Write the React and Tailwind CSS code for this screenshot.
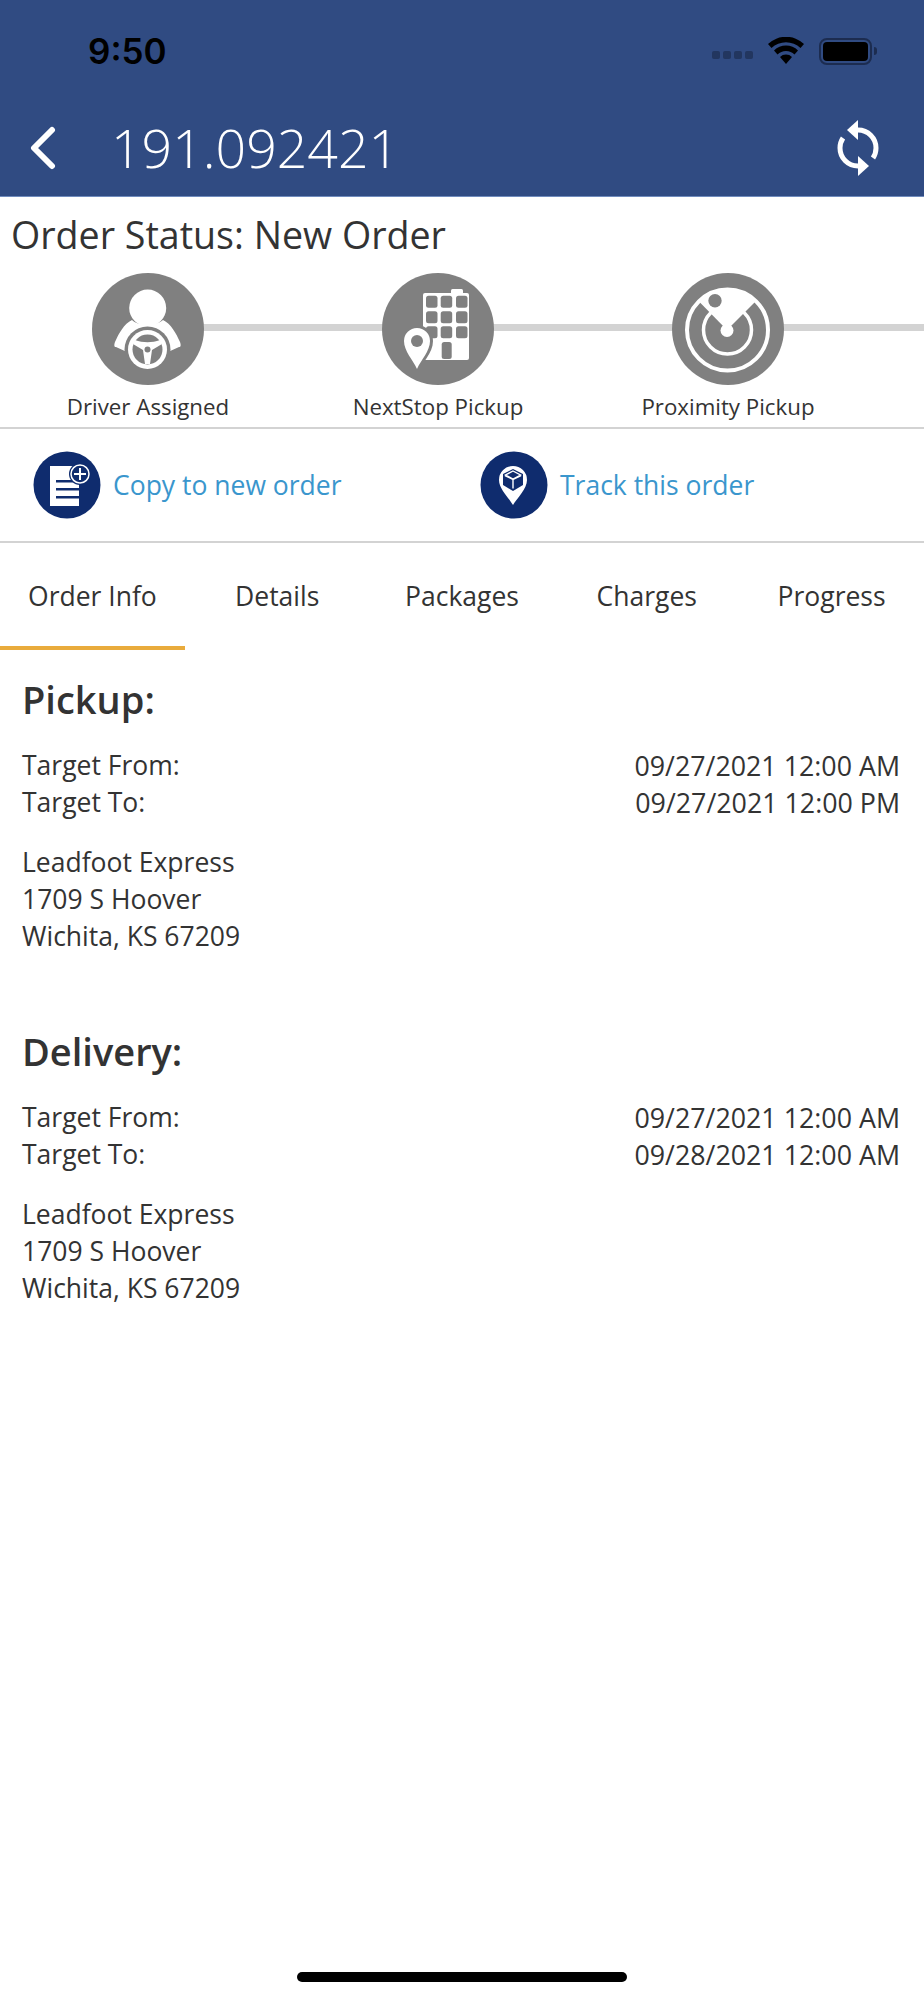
const FONT = "font-['Open_Sans',sans-serif]";

function DriverIcon() {
  return (
    <svg viewBox="0 0 112 112" className="w-[112px] h-[112px]">
      <circle cx="56" cy="56" r="56" fill="#808080" />
      <circle cx="55.7" cy="35" r="18.500" fill="#fff" />
      <path d="M40 47c5 6 25 6 31 0 8 4 13 13 17 22 1 3 1 5-1 5l-11 5H35l-11-5c-2 0-2-2-1-5 4-9 9-18 17-22z" fill="#fff" />
      <circle cx="55.500" cy="76.500" r="23" fill="#808080" />
      <circle cx="55.500" cy="76.500" r="19.500" fill="#fff" />
      <circle cx="55.500" cy="76.500" r="15" fill="#808080" />
      <path d="M43 67c8 3 17 3 25 0l2 4-10 6-2 14h-5l-2-14-10-6z" fill="#fff" />
      <circle cx="55.500" cy="76.500" r="3" fill="#808080" />
    </svg>
  );
}

function BuildingIcon() {
  const cols = [44, 58.7, 74];
  const rows = [22.7, 38.3, 53.3];
  return (
    <svg viewBox="0 0 112 112" className="w-[112px] h-[112px]">
      <circle cx="56" cy="56" r="56" fill="#808080" />
      <rect x="41" y="20" width="46" height="67" rx="2" fill="#fff" />
      <rect x="69" y="16" width="12" height="6" rx="1.500" fill="#fff" />
      {rows.map((y) =>
        cols.map((x) => <rect key={`${x}-${y}`} x={x} y={y} width="11.500" height="12" rx="2.500" fill="#808080" />)
      )}
      <rect x="59.700" y="69" width="10" height="17" rx="2.500" fill="#808080" />
      <path d="M35 100c-5-10-16-20-16-32a16 16 0 0 1 32 0c0 12-11 22-16 32z" fill="#808080" />
      <path d="M35 96c-4-9-13-18-13-28a13 13 0 0 1 26 0c0 10-9 19-13 28z" fill="#fff" />
      <circle cx="35" cy="68" r="6" fill="#808080" />
    </svg>
  );
}

function RadarIcon() {
  return (
    <svg viewBox="0 0 112 112" className="w-[112px] h-[112px]">
      <circle cx="56" cy="56" r="56" fill="#808080" />
      <circle cx="55.500" cy="57" r="40.500" fill="none" stroke="#fff" strokeWidth="4" />
      <circle cx="55.500" cy="57" r="24" fill="none" stroke="#fff" strokeWidth="3.500" />
      <path d="M55 57L26.500 28A41 41 0 0 1 84 28z" fill="#fff" />
      <circle cx="43" cy="27.700" r="6.700" fill="#808080" />
      <circle cx="55" cy="57.500" r="6.500" fill="#fff" />
    </svg>
  );
}

function CopyIcon() {
  return (
    <svg viewBox="0 0 68 68" className="w-[68px] h-[68px]">
      <circle cx="34" cy="34" r="33.500" fill="#0f2c6e" />
      <rect x="17" y="15" width="29" height="40" fill="#fff" />
      <rect x="23" y="29" width="22" height="2.500" fill="#0f2c6e" />
      <rect x="23" y="37" width="23" height="2.500" fill="#0f2c6e" />
      <rect x="23" y="45" width="23" height="2.500" fill="#0f2c6e" />
      <circle cx="47" cy="23" r="11" fill="#0f2c6e" />
      <circle cx="47" cy="23" r="9" fill="none" stroke="#fff" strokeWidth="1.500" />
      <path d="M47 17v12M41 23h12" stroke="#fff" strokeWidth="2" />
    </svg>
  );
}

function TrackIcon() {
  return (
    <svg viewBox="0 0 68 68" className="w-[68px] h-[68px]">
      <circle cx="34" cy="34" r="33.500" fill="#0f2c6e" />
      <path d="M33 54c-4-7-14-16-14-25a14 14 0 0 1 28 0c0 9-10 18-14 25z" fill="#fff" />
      <path d="M33 18l10 5v11l-10 6-10-6V23z" fill="#0f2c6e" />
      <path d="M25 24.500l8 4 8-4M33 28.500v9M33 20l7.500 4-7.500 4-7.500-4z" fill="none" stroke="#fff" strokeWidth="1.400" />
    </svg>
  );
}

function RefreshIcon() {
  return (
    <svg viewBox="0 0 44 58" className="w-[44px] h-[58px]">
      <path d="M22 11c10 0 18 8 18 18 0 4-1 7-3 10" fill="none" stroke="#fff" strokeWidth="5" />
      <path d="M22 1v20L11 11z" fill="#fff" />
      <path d="M22 47c-10 0-18-8-18-18 0-4 1-7 3-10" fill="none" stroke="#fff" strokeWidth="5" />
      <path d="M22 37v20l11-10z" fill="#fff" />
    </svg>
  );
}

function Step({ icon, label }) {
  return (
    <div className="relative w-[290px] shrink-0 flex flex-col items-center">
      <div className="absolute left-[145px] top-[51px] w-[290px] h-[7px] bg-[#d3d3d3]" />
      <div className="relative h-[112px]">{icon}</div>
      <div className="mt-[7px] text-[22.3px] leading-[30px] text-[#333]">{label}</div>
    </div>
  );
}

function TimeRow({ label, value }) {
  return (
    <div className="flex justify-between">
      <span>{label}</span>
      <span className="text-[26.8px]">{value}</span>
    </div>
  );
}

function Stop({ title, from, to }) {
  return (
    <section>
      <h2 className="text-[38px] leading-[44px] font-semibold">{title}</h2>
      <div className="mt-[26px]">
        <TimeRow label="Target From:" value={from} />
        <TimeRow label="Target To:" value={to} />
      </div>
      <div className="mt-[23px]">
        <div>Leadfoot Express</div>
        <div>1709 S Hoover</div>
        <div>Wichita, KS 67209</div>
      </div>
    </section>
  );
}

const tabs = ['Order Info', 'Details', 'Packages', 'Charges', 'Progress'];

export default function App() {
  return (
    <div className={`${FONT} relative w-[924px] h-[2000px] bg-white overflow-hidden text-[#333]`}>
      <header className="h-[197px] bg-[#304b82] border-b border-[#6f8bbd]">
        <div className="h-[100px] flex items-center justify-between pl-[88px] pr-[47px] pt-[2px]">
          <span className="font-['Inter',sans-serif] text-[35px] font-semibold text-black">9:50</span>
          <div className="flex items-center">
            <div className="flex gap-[3px] mt-[8px] mr-[15px]">
              <i className="w-[8px] h-[8px] rounded-[2px] bg-[#22365f]" />
              <i className="w-[8px] h-[8px] rounded-[2px] bg-[#22365f]" />
              <i className="w-[8px] h-[8px] rounded-[2px] bg-[#22365f]" />
              <i className="w-[8px] h-[8px] rounded-[2px] bg-[#22365f]" />
            </div>
            <svg viewBox="0 0 36 28" className="w-[36px] h-[28px] mr-[15px]">
              <path d="M18 27l-6-7a8.500 8.500 0 0 1 12 0z" />
              <path d="M9.500 17.500l-3.500-4a17 17 0 0 1 24 0l-3.500 4a12 12 0 0 0-17 0z" />
              <path d="M3.500 11L0 7a26 26 0 0 1 36 0l-3.500 4a21 21 0 0 0-29 0z" />
            </svg>
            <div className="w-[53px] h-[27px] rounded-[8px] border-2 border-[#1c2c50] p-[2px]">
              <div className="w-full h-full rounded-[4px] bg-black" />
            </div>
            <div className="w-[3px] h-[8px] rounded-r-[3px] bg-[#1c2c50] ml-[2px]" />
          </div>
        </div>
        <div className="h-[95px] flex items-center justify-between pl-[30px] pr-[44px]">
          <div className="flex items-center">
            <svg viewBox="0 0 26 44" className="w-[26px] h-[44px]">
              <path d="M22 4L4 22l18 18" fill="none" stroke="#fff" strokeWidth="6" strokeLinecap="round" strokeLinejoin="round" />
            </svg>
            <span className="ml-[55px] text-[53.6px] font-light text-white leading-none">191.092421</span>
          </div>
          <RefreshIcon />
        </div>
      </header>

      <div className="pl-[11px] pt-[15px] text-[37.6px] leading-[46px]">Order Status: New Order</div>

      <div className="flex pl-[3px] pt-[15px] pb-[5px]">
        <Step icon={<DriverIcon />} label="Driver Assigned" />
        <Step icon={<BuildingIcon />} label="NextStop Pickup" />
        <Step icon={<RadarIcon />} label="Proximity Pickup" />
      </div>

      <div className="h-[112px] border-y-2 border-[#d3d3d3] box-content flex items-center text-[26.5px] text-[#3a96cd]">
        <div className="w-[446px] pl-[33px] flex items-center gap-[12px]">
          <CopyIcon />
          <span className="mt-[1px]">Copy to new order</span>
        </div>
        <div className="pl-[34px] flex items-center gap-[12px]">
          <TrackIcon />
          <span className="mt-[1px]">Track this order</span>
        </div>
      </div>

      <nav className="grid grid-cols-5 h-[107px] text-[26.5px]">
        {tabs.map((tab, i) => (
          <div key={tab} className={`flex items-center justify-center pt-[5px] ${i === 0 ? 'border-b-4 border-[#e9ab3c]' : 'pb-[4px]'}`}>
            {tab}
          </div>
        ))}
      </nav>

      <main className="pl-[22px] pr-[24px] pt-[27px] text-[26.5px] leading-[37px] flex flex-col gap-[74px]">
        <Stop title="Pickup:" from="09/27/2021 12:00 AM" to="09/27/2021 12:00 PM" />
        <Stop title="Delivery:" from="09/27/2021 12:00 AM" to="09/28/2021 12:00 AM" />
      </main>

      <div className="absolute bottom-[18px] left-[297px] w-[330px] h-[10px] rounded-full bg-black" />
    </div>
  );
}
